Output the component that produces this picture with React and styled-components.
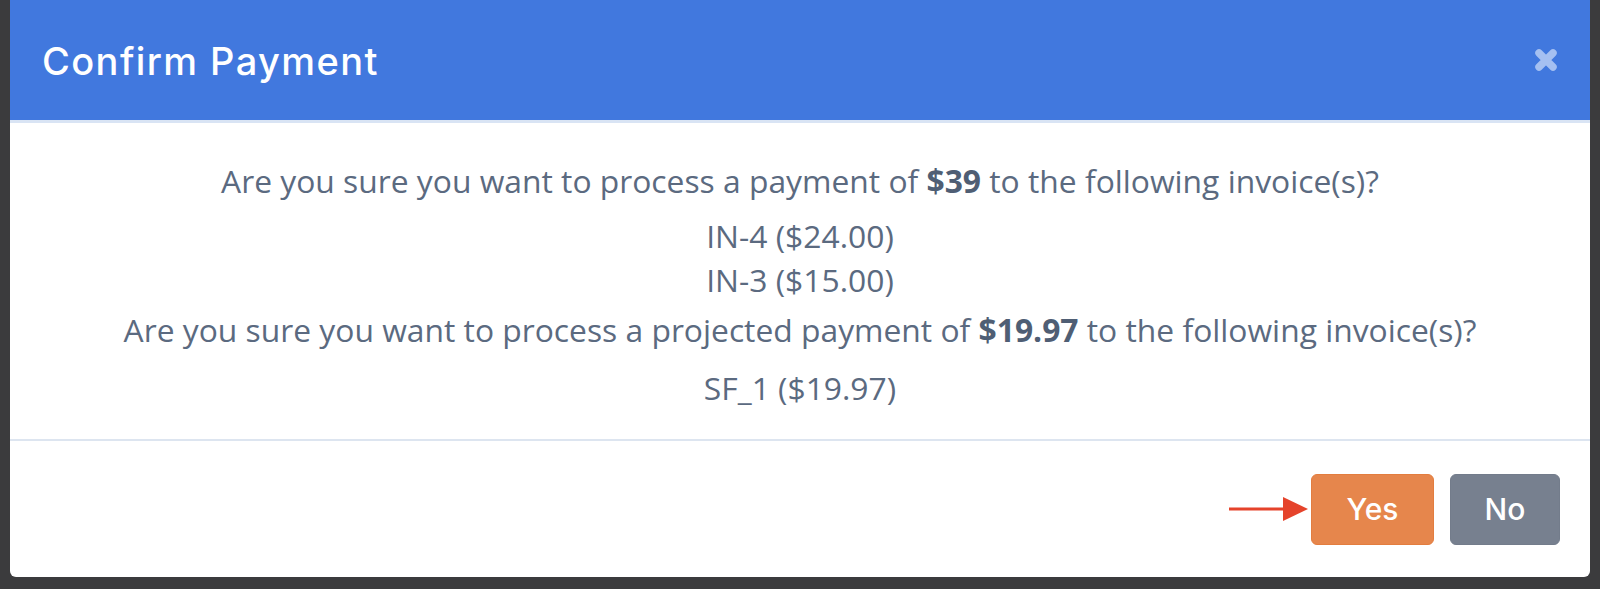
import React from 'react';
import styled, { createGlobalStyle } from 'styled-components';

const GlobalStyle = createGlobalStyle`
  html, body {
    margin: 0;
    padding: 0;
    background: #3b3b3d;
  }
  body {
    font-family: "Open Sans", "Liberation Sans", sans-serif;
  }
`;

const invoices = [
  { id: 'IN-4', amount: '$24.00' },
  { id: 'IN-3', amount: '$15.00' },
];

const projected = [{ id: 'SF_1', amount: '$19.97' }];

const App = () => {
  return (
    <>
      <GlobalStyle />
      <Backdrop>
        <Modal>
          <Header>
            <Title>Confirm Payment</Title>
            <CloseButton aria-label="Close">
              <svg width="26" height="26" viewBox="0 0 26 26">
                <path
                  d="M6 6 L20 20 M20 6 L6 20"
                  stroke="currentColor"
                  strokeWidth="7.5"
                  strokeLinecap="round"
                />
              </svg>
            </CloseButton>
          </Header>
          <Body>
            <Question>
              Are you sure you want to process a payment of <strong>$39</strong> to the following invoice(s)?
            </Question>
            {invoices.map(inv => (
              <InvoiceLine key={inv.id}>{inv.id} ({inv.amount})</InvoiceLine>
            ))}
            <Question $top>
              Are you sure you want to process a projected payment of <strong>$19.97</strong> to the following invoice(s)?
            </Question>
            {projected.map(inv => (
              <InvoiceLine key={inv.id}>{inv.id} ({inv.amount})</InvoiceLine>
            ))}
          </Body>
          <Footer>
            <Arrow width="80" height="26" viewBox="0 0 80 26">
              <line x1="0" y1="13" x2="58" y2="13" stroke="#e5432b" strokeWidth="3" />
              <polygon points="54,1 79,13 54,25" fill="#e5432b" />
            </Arrow>
            <Button $variant="yes">Yes</Button>
            <Button $variant="no">No</Button>
          </Footer>
        </Modal>
      </Backdrop>
    </>
  );
};

const Backdrop = styled.div`
  width: 1600px;
  height: 589px;
  padding: 0 10px 12px 10px;
  box-sizing: border-box;
  background: #3b3b3d;
`;

const Modal = styled.div`
  width: 1580px;
  height: 577px;
  background: #fff;
  border-radius: 0 0 6px 6px;
  overflow: hidden;
  display: flex;
  flex-direction: column;
`;

const Header = styled.div`
  height: 120px;
  flex-shrink: 0;
  background: #4178de;
  border-bottom: 3px solid #d9e4f4;
  display: flex;
  align-items: center;
  justify-content: space-between;
  padding: 0 31px 0 32px;
`;

const Title = styled.h1`
  margin: 0;
  color: #fff;
  font-family: Inter, "Liberation Sans", sans-serif;
  font-weight: 500;
  font-size: 38px;
  letter-spacing: 1.4px;
  padding-top: 2px;
`;

const CloseButton = styled.button`
  border: none;
  background: none;
  padding: 0;
  color: #a5c0f1;
  display: flex;
  cursor: pointer;
`;

const Body = styled.div`
  height: 318px;
  box-sizing: border-box;
  padding-top: 36px;
  border-bottom: 2px solid #dde5f0;
  display: flex;
  flex-direction: column;
  align-items: center;
  color: #5b6a80;
  font-size: 31.8px;
  line-height: 44px;

  strong {
    font-weight: 700;
    color: #4f5e74;
  }
`;

const Question = styled.p`
  margin: ${p => (p.$top ? '6px' : '0')} 0 ${p => (p.$top ? '14px' : '11px')} 0;
`;

const InvoiceLine = styled.div``;

const Footer = styled.div`
  flex: 1;
  display: flex;
  align-items: center;
  justify-content: flex-end;
  padding: 0 30px 0 0;
`;

const Arrow = styled.svg`
  margin-right: 2px;
`;

const Button = styled.button`
  height: 71px;
  border-radius: 6px;
  border: 1px solid ${p => (p.$variant === 'yes' ? '#e37d3f' : '#737c8b')};
  background: ${p => (p.$variant === 'yes' ? '#e6864c' : '#77808f')};
  color: #fff;
  font-family: Inter, "Liberation Sans", sans-serif;
  font-weight: 500;
  font-size: 30px;
  padding: 0;
  width: ${p => (p.$variant === 'yes' ? '123px' : '110px')};
  margin-left: ${p => (p.$variant === 'yes' ? '0' : '16px')};
  cursor: pointer;
`;

export default App;
